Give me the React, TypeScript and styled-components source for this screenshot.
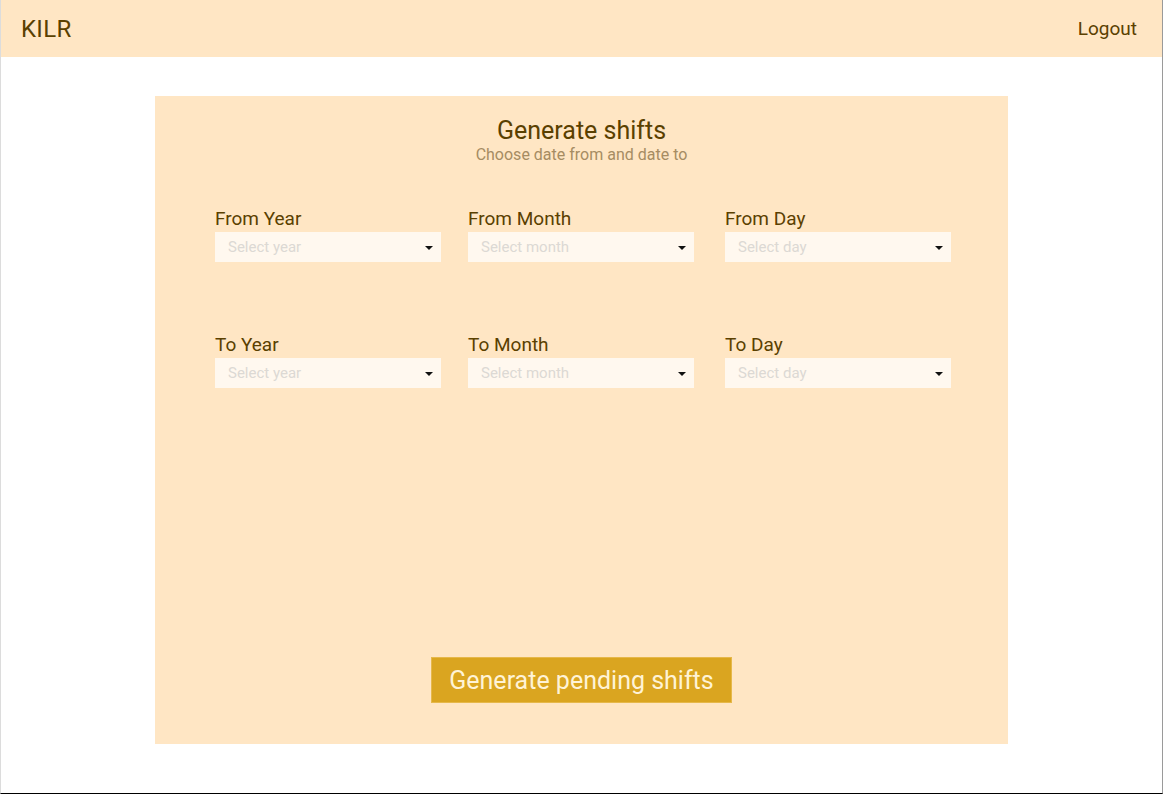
import React from "react";
import styled, { createGlobalStyle } from "styled-components";

const Global = createGlobalStyle`
  html, body { margin: 0; padding: 0; background: #fff; }
  body { font-family: Roboto, "Noto Sans", sans-serif; }
  * { box-sizing: border-box; }
`;

const Frame = styled.div`
  width: 1163px;
  height: 794px;
  border-left: 1px solid #dcdcdc;
  border-right: 1px solid #9a9a9a;
  border-bottom: 1px solid #000;
  display: flex;
  flex-direction: column;
  overflow: hidden;
`;

const Header = styled.header`
  height: 57px;
  background: #ffe6c4;
  display: flex;
  align-items: center;
  justify-content: space-between;
  padding: 0 25px 0 20px;
  color: #5a4000;
  flex-shrink: 0;
`;

const Brand = styled.div`
  font-size: 24px;
  letter-spacing: 0.3px;
`;

const Logout = styled.div`
  font-size: 19px;
`;

const Main = styled.main`
  flex: 1;
  padding: 39px 0 0 154px;
`;

const Card = styled.section`
  width: 853px;
  height: 648px;
  background: #ffe6c4;
  display: flex;
  flex-direction: column;
  align-items: center;
  padding-top: 20px;
`;

const Title = styled.h1`
  margin: 0;
  font-size: 25px;
  font-weight: 400;
  color: #5a4000;
  line-height: 30px;
`;

const Subtitle = styled.p`
  margin: 0;
  font-size: 16px;
  color: #a68c62;
  line-height: 17px;
`;

const Grid = styled.div`
  align-self: stretch;
  display: grid;
  grid-template-columns: 253px 257px 226px;
  row-gap: 73px;
  padding: 46px 0 0 60px;
`;

const Field = styled.div`
  display: flex;
  flex-direction: column;
`;

const Label = styled.label`
  font-size: 19px;
  color: #5a4000;
  line-height: 20px;
  margin-bottom: 3px;
`;

const Select = styled.div`
  width: 226px;
  height: 30px;
  background: #fff8ef;
  display: flex;
  align-items: center;
  justify-content: space-between;
  padding: 0 8px 0 13px;
  font-size: 15px;
  color: #dcd9d4;
`;

const Caret = styled.span`
  width: 0;
  height: 0;
  border-left: 4px solid transparent;
  border-right: 4px solid transparent;
  border-top: 4px solid #111;
  margin-top: 2px;
`;

const Spacer = styled.div`
  flex: 1;
`;

const Button = styled.button`
  width: 301px;
  height: 46px;
  background: #daa520;
  border: 1px solid #e6b84a;
  color: #fff3d6;
  font-family: Roboto, sans-serif;
  font-size: 25px;
  margin-bottom: 41px;
  cursor: pointer;
`;

const fields = [
  ["From Year", "Select year"],
  ["From Month", "Select month"],
  ["From Day", "Select day"],
  ["To Year", "Select year"],
  ["To Month", "Select month"],
  ["To Day", "Select day"],
];

export default function App() {
  return (
    <>
      <Global />
      <Frame>
        <Header>
          <Brand>KILR</Brand>
          <Logout>Logout</Logout>
        </Header>
        <Main>
          <Card>
            <Title>Generate shifts</Title>
            <Subtitle>Choose date from and date to</Subtitle>
            <Grid>
              {fields.map(([label, ph]) => (
                <Field key={label}>
                  <Label>{label}</Label>
                  <Select>
                    {ph}
                    <Caret />
                  </Select>
                </Field>
              ))}
            </Grid>
            <Spacer />
            <Button>Generate pending shifts</Button>
          </Card>
        </Main>
      </Frame>
    </>
  );
}
